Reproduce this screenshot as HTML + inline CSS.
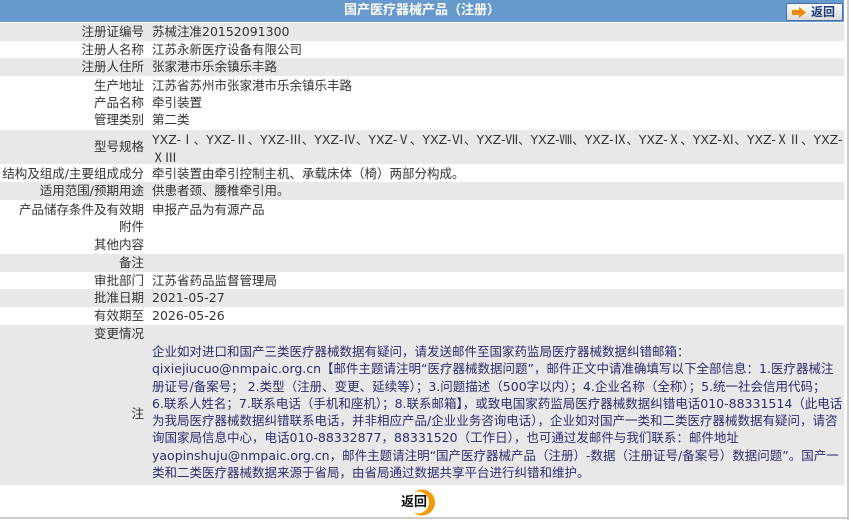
<!DOCTYPE html>
<html><head><meta charset="utf-8"><style>
*{margin:0;padding:0;box-sizing:border-box}
body{width:850px;height:520px;background:#fff;position:relative;overflow:hidden;font-family:"DejaVu Sans","Noto Sans CJK SC",sans-serif;font-size:12.5px;color:#333}
.r{position:absolute;left:0;width:844px}
.g{background:#e8e8e8}
.l{position:absolute;right:706px;white-space:nowrap;color:#333;line-height:18px;height:18px}
.v{position:absolute;left:152px;white-space:nowrap;color:#333;line-height:18px;height:18px;max-width:692px;overflow:hidden}
.n{color:#2b2d6e;line-height:17.3px;height:auto}
.c{font-family:"Noto Sans CJK SC",sans-serif}
</style></head><body>
<div class="r" style="top:0;height:22px;background:#6699cc"></div>
<div style="position:absolute;left:0;width:844px;top:2px;line-height:18px;text-align:center;color:#fff;font-weight:bold;font-size:13px">国产医疗器械产品（注册）</div>
<div style="position:absolute;left:786px;top:3px;width:57px;height:18px;border:1px solid #4a6fa5;border-radius:2px;background:linear-gradient(#fafafa,#dcdcdc)">
<svg style="position:absolute;left:5px;top:3px" width="14" height="11"><path d="M0 3h7V0l7 5.5-7 5.5V8H0z" fill="#f08a00"/></svg>
<span style="position:absolute;left:24px;top:0;line-height:16px;font-weight:bold;color:#1a3a7a;font-size:12px">返回</span></div>
<div style="position:absolute;left:847px;top:0;width:2px;height:520px;background:#ccc"></div>
<div class="r g" style="top:23px;height:18px"></div>
<div class="r g" style="top:58px;height:18px"></div>
<div class="r g" style="top:130px;height:34px"></div>
<div class="r g" style="top:182px;height:18px"></div>
<div class="r g" style="top:254px;height:18px"></div>
<div class="r g" style="top:289px;height:18px"></div>
<div class="r g" style="top:325px;height:160px"></div>
<div style="position:absolute;left:0;top:517px;width:847px;height:2px;background:#ccc"></div>
<div class="l" style="top:23px">注册证编号</div><div class="v" style="top:23px">苏械注准20152091300</div>
<div class="l" style="top:41px">注册人名称</div><div class="v" style="top:41px">江苏永新医疗设备有限公司</div>
<div class="l" style="top:58px">注册人住所</div><div class="v" style="top:58px">张家港市乐余镇乐丰路</div>
<div class="l" style="top:77px">生产地址</div><div class="v" style="top:77px">江苏省苏州市张家港市乐余镇乐丰路</div>
<div class="l" style="top:94px">产品名称</div><div class="v" style="top:94px">牵引装置</div>
<div class="l" style="top:111px">管理类别</div><div class="v" style="top:111px">第二类</div>
<div class="l" style="top:138px">型号规格</div><div class="v" style="top:130px;line-height:17px;height:34px">YXZ-<span class="c">Ⅰ</span>、YXZ-<span class="c">Ⅱ</span>、YXZ-<span class="c">Ⅲ</span>、YXZ-<span class="c">Ⅳ</span>、YXZ-<span class="c">Ⅴ</span>、YXZ-<span class="c">Ⅵ</span>、YXZ-<span class="c">Ⅶ</span>、YXZ-<span class="c">Ⅷ</span>、YXZ-<span class="c">Ⅸ</span>、YXZ-<span class="c">Ⅹ</span>、YXZ-<span class="c">Ⅺ</span>、YXZ-<span class="c">ⅩⅡ</span>、YXZ-<br><span class="c">ⅩⅢ</span></div>
<div class="l" style="top:165px">结构及组成/主要组成成分</div><div class="v" style="top:165px">牵引装置由牵引控制主机、承载床体（椅）两部分构成。</div>
<div class="l" style="top:182px">适用范围/预期用途</div><div class="v" style="top:182px">供患者颈、腰椎牵引用。</div>
<div class="l" style="top:201px">产品储存条件及有效期</div><div class="v" style="top:201px">申报产品为有源产品</div>
<div class="l" style="top:218px">附件</div>
<div class="l" style="top:236px">其他内容</div>
<div class="l" style="top:254px">备注</div>
<div class="l" style="top:272px">审批部门</div><div class="v" style="top:272px">江苏省药品监督管理局</div>
<div class="l" style="top:289px">批准日期</div><div class="v" style="top:289px">2021-05-27</div>
<div class="l" style="top:307px">有效期至</div><div class="v" style="top:307px">2026-05-26</div>
<div class="l" style="top:325px">变更情况</div>
<div class="l" style="top:405px">注</div>
<div class="v n" style="top:343px">企业如对进口和国产三类医疗器械数据有疑问，请发送邮件至国家药监局医疗器械数据纠错邮箱：<br>qixiejiucuo@nmpaic.org.cn【邮件主题请注明“医疗器械数据问题”，邮件正文中请准确填写以下全部信息：1.医疗器械注<br>册证号/备案号； 2.类型（注册、变更、延续等）；3.问题描述（500字以内）；4.企业名称（全称）；5.统一社会信用代码；<br>6.联系人姓名；7.联系电话（手机和座机）；8.联系邮箱】，或致电国家药监局医疗器械数据纠错电话010-88331514（此电话<br>为我局医疗器械数据纠错联系电话，并非相应产品/企业业务咨询电话），企业如对国产一类和二类医疗器械数据有疑问，请咨<br>询国家局信息中心，电话010-88332877，88331520（工作日），也可通过发邮件与我们联系：邮件地址<br>yaopinshuju@nmpaic.org.cn，邮件主题请注明“国产医疗器械产品（注册）-数据（注册证号/备案号）数据问题”。国产一<br>类和二类医疗器械数据来源于省局，由省局通过数据共享平台进行纠错和维护。</div>
<svg style="position:absolute;left:407px;top:489px" width="29" height="27"><circle cx="15" cy="13.5" r="13" fill="#f29a00"/><circle cx="11" cy="13.5" r="11" fill="#fff"/></svg>
<div style="position:absolute;left:401px;top:494px;line-height:18px;font-weight:bold;color:#111;font-size:13px">返回</div>
</body></html>
